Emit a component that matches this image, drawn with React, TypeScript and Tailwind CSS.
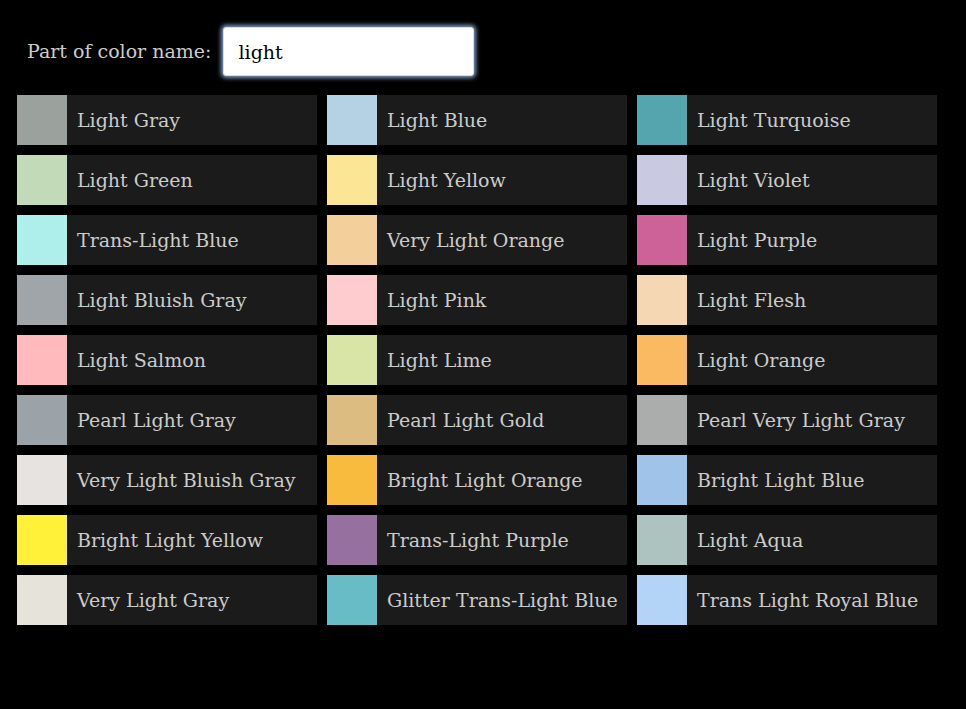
import React from "react";

const colors: [string, string][] = [
  ["Light Gray", "#9ba19d"],
  ["Light Blue", "#b4d2e3"],
  ["Light Turquoise", "#55a5af"],
  ["Light Green", "#c2dab8"],
  ["Light Yellow", "#fbe696"],
  ["Light Violet", "#c9cae2"],
  ["Trans-Light Blue", "#aeefec"],
  ["Very Light Orange", "#f3cf9b"],
  ["Light Purple", "#cd6298"],
  ["Light Bluish Gray", "#a0a5a9"],
  ["Light Pink", "#fecccf"],
  ["Light Flesh", "#f6d7b3"],
  ["Light Salmon", "#febabd"],
  ["Light Lime", "#d9e4a7"],
  ["Light Orange", "#f9ba61"],
  ["Pearl Light Gray", "#9ca3a8"],
  ["Pearl Light Gold", "#dcbc81"],
  ["Pearl Very Light Gray", "#abadac"],
  ["Very Light Bluish Gray", "#e6e3e0"],
  ["Bright Light Orange", "#f8bb3d"],
  ["Bright Light Blue", "#9fc3e9"],
  ["Bright Light Yellow", "#fff03a"],
  ["Trans-Light Purple", "#96709f"],
  ["Light Aqua", "#adc3c0"],
  ["Very Light Gray", "#e6e3da"],
  ["Glitter Trans-Light Blue", "#68bcc5"],
  ["Trans Light Royal Blue", "#b4d4f7"],
];

const App = () => {
  return (
    <div className="min-h-[709px] w-full bg-black px-[17px] py-[27px] font-['DejaVu_Serif',serif]">
      <div className="flex items-center pl-[10px] mb-[19px]">
        <label className="text-[19px] text-[#cccccc] mr-[12px]">Part of color name:</label>
        <input
          autoFocus
          defaultValue="light"
          className="w-[251px] h-[49px] rounded-[3px] border border-[#d8dde3] bg-white px-[14px] text-[19px] text-black outline-none shadow-[0_0_4px_2px_rgba(150,185,230,0.85)] caret-black"
        />
      </div>
      <div className="grid grid-cols-[300px_300px_300px] gap-[10px]">
        {colors.map(([name, hex]) => (
          <div key={name} className="flex h-[50px] bg-[#1b1b1b]">
            <div className="w-[50px] h-[50px] shrink-0" style={{ backgroundColor: hex }} />
            <div className="flex items-center pl-[10px] text-[19px] text-[#cccccc] whitespace-nowrap">{name}</div>
          </div>
        ))}
      </div>
    </div>
  );
};

export default App;
